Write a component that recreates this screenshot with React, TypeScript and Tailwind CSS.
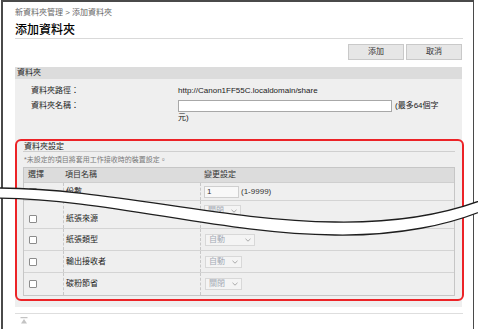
import React from "react";

const rows = [
  { name: "紙張類型", value: "自動", w: "w-[50px]" },
  { name: "輸出接收者", value: "自動", w: "w-[37px]" },
  { name: "碳粉節省", value: "關閉", w: "w-[37px]" },
];

function Chevron() {
  return (
    <svg width="6" height="4" viewBox="0 0 6 4" className="shrink-0">
      <path d="M0.5 0.8 L3 3.2 L5.5 0.8" fill="none" stroke="#a0a0a0" strokeWidth="0.9" />
    </svg>
  );
}

function Select({ value, w }: { value: string; w: string }) {
  return (
    <div
      className={`${w} flex h-[12px] items-center justify-between border border-[#d8d8d8] bg-[#f4f4f4] px-[3px] text-[8px] leading-[10px] text-[#a4abb4]`}
    >
      <span>{value}</span>
      <Chevron />
    </div>
  );
}

function Checkbox() {
  return <div className="h-[8px] w-[8px] rounded-[1px] border border-[#8c8c8c] bg-white" />;
}

// the torn-paper band that marks the cut in the screenshot
function Tear() {
  const upper = "M-4 188 C 110 188, 220 221, 335 222 C 400 223, 450 212, 482 200";
  const lower = "M-4 198 C 110 199, 220 234, 335 235 C 400 236, 450 224, 482 211";
  const back = "L 482 211 C 450 224, 400 236, 335 235 C 220 234, 110 199, -4 198 Z";
  return (
    <svg width="478" height="329" viewBox="0 0 478 329" className="pointer-events-none absolute left-0 top-0">
      <path d={`${upper} ${back}`} fill="#ffffff" />
      <path d={upper} fill="none" stroke="#1e1e1e" strokeWidth="1.3" />
      <path d={lower} fill="none" stroke="#1e1e1e" strokeWidth="1.3" />
    </svg>
  );
}

export default function App() {
  return (
    <div className="relative h-[329px] w-[478px] overflow-hidden bg-white font-['Liberation_Sans','Noto_Sans_CJK_TC',sans-serif] text-[#222]">
      <div className="ml-[1px] h-[340px] w-[473px] border-l-2 border-r border-t-2 border-[#4a4a4a] pl-[12px] pr-[10px]">
        <div className="pt-[6px] text-[8px] leading-[10px] text-[#666]">新資料夾管理 &gt; 添加資料夾</div>

        <h1 className="mt-[5px] h-[16px] border-b border-[#d9d9d9] text-[12px] font-medium leading-[15px] text-black">
          添加資料夾
        </h1>

        <div className="mt-[5px] flex justify-end gap-[2px] pr-[1px]">
          <button className="h-[16px] w-[56px] border border-[#c9c9c9] bg-[#e6e6e6] text-[8px] text-[#333]">添加</button>
          <button className="h-[16px] w-[56px] border border-[#c9c9c9] bg-[#e6e6e6] text-[8px] text-[#333]">取消</button>
        </div>

        <section className="mt-[7px] mr-[1px] bg-[#efefef] pb-[6px]">
          <div className="h-[12px] bg-[#dcdcdc] pl-[2px] text-[8px] leading-[12px] text-[#222]">資料夾</div>

          <div className="pl-[16px] pt-[6px] text-[8px] leading-[12px]">
            <div className="flex h-[12px]">
              <span className="w-[147px]">資料夾路徑：</span>
              <span>http://Canon1FF55C.localdomain/share</span>
            </div>
            <div className="mt-[3px] flex h-[12px] items-center">
              <span className="w-[147px]">資料夾名稱：</span>
              <div className="h-[12px] w-[214px] border border-[#a8a8a8] bg-white" />
              <span className="ml-[3px]">(最多64個字</span>
            </div>
            <div className="ml-[147px] h-[12px]">元)</div>
          </div>

          <div className="mr-[-2px] mt-[15px] rounded-[6px] border-2 border-[#ec2327] pb-[3px] pl-[6px] pr-[7px]">
            <div className="h-[11px] border-b border-[#cfcfcf] pl-[1px] text-[8px] leading-[11px] text-[#222]">
              資料夾設定
            </div>
            <div className="h-[15px] pl-[1px] text-[7px] leading-[15px] text-[#7a7a7a]">
              *未設定的項目將套用工作接收時的裝置設定。
            </div>

            <div className="border border-[#c6c6c6] text-[8px]">
              <div className="grid h-[15px] grid-cols-[39px_137px_1fr] items-center border-b border-[#cfcfcf] bg-[#dcdcdc] leading-[14px] text-[#333]">
                <span className="pl-[4px]">選擇</span>
                <span className="pl-[2px]">項目名稱</span>
                <span className="pl-[4px]">變更設定</span>
              </div>

              <div className="grid h-[18px] grid-cols-[39px_137px_1fr] border-b border-[#d4d4d4]">
                <div className="flex items-center pl-[5px]">
                  <Checkbox />
                </div>
                <div className="flex items-center border-l border-dashed border-[#c8c8c8] pl-[2px]">份數</div>
                <div className="flex items-center border-l border-dashed border-[#c8c8c8] pl-[3px]">
                  <div className="h-[12px] w-[35px] border border-[#cfcfcf] bg-[#f8f8f8] pl-[2px] leading-[10px] text-[#333]">1</div>
                  <span className="ml-[2px] text-[#333]">(1-9999)</span>
                </div>
              </div>

              {/* row cut by the tear: its select shows above the band, the label below */}
              <div className="grid h-[28px] grid-cols-[39px_137px_1fr] border-b border-[#d4d4d4]">
                <div className="flex items-end pb-[5px] pl-[5px]">
                  <Checkbox />
                </div>
                <div className="flex items-end border-l border-dashed border-[#c8c8c8] pb-[4px] pl-[2px] leading-[10px]">紙張來源</div>
                <div className="border-l border-dashed border-[#c8c8c8] pl-[3px] pt-[4px]">
                  <Select value="關閉" w="w-[37px]" />
                </div>
              </div>

              {rows.map((row, i) => (
                <div
                  key={row.name}
                  className={`grid h-[22px] grid-cols-[39px_137px_1fr] ${i < rows.length - 1 ? "border-b border-[#d4d4d4]" : ""}`}
                >
                  <div className="flex items-center pl-[5px]">
                    <Checkbox />
                  </div>
                  <div className="flex items-center border-l border-dashed border-[#c8c8c8] pl-[2px]">{row.name}</div>
                  <div className="flex items-center border-l border-dashed border-[#c8c8c8] pl-[4px]">
                    <Select value={row.value} w={row.w} />
                  </div>
                </div>
              ))}
            </div>
          </div>
        </section>

        <div className="mt-[6px] border-t border-[#dedede] pl-[5px] pt-[3px]">
          <svg width="8" height="7" viewBox="0 0 8 7">
            <path d="M0.5 0.7 H7.5" stroke="#b5b5b5" strokeWidth="1" />
            <path d="M4 2 L7 6.5 H1 Z" fill="#c4c4c4" />
          </svg>
        </div>
      </div>
      <Tear />
    </div>
  );
}
